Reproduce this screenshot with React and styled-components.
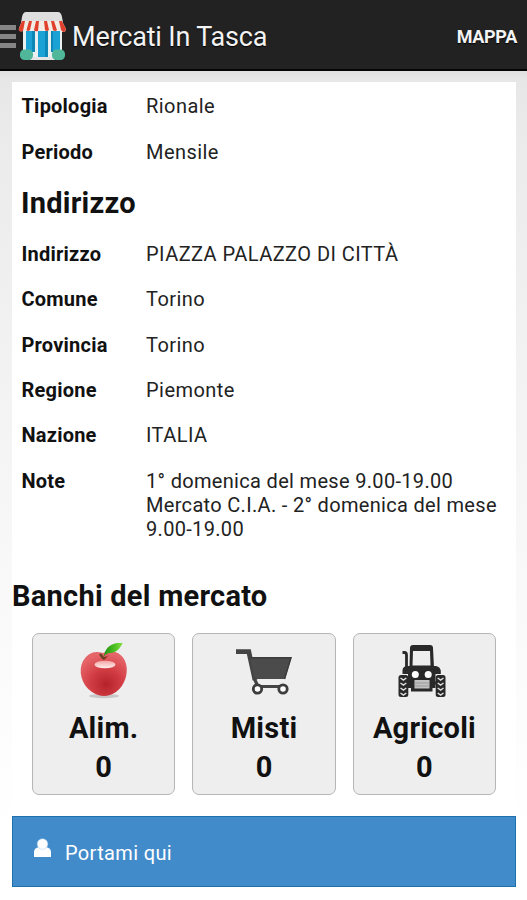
import React from "react";
import styled, { createGlobalStyle } from "styled-components";

const GlobalStyle = createGlobalStyle`
  * { box-sizing: border-box; }
  body { margin: 0; background: #fff; }
`;

const Screen = styled.div`
  width: 527px;
  height: 900px;
  overflow: hidden;
  display: flex;
  flex-direction: column;
  font-family: Roboto, "Liberation Sans", sans-serif;
  color: #111;
  background: linear-gradient(#dedede 70px, #e7e7e7 80px, #ebebeb 140px, #f7f7f7 520px, #fff 830px);
`;

const Header = styled.header`
  height: 71px;
  flex: none;
  display: flex;
  align-items: center;
  background: #222;
  border-bottom: 2px solid #050505;
  color: #f3f3f3;
  padding: 3px 10px 0 0;
  text-shadow: 0 1px 1px #000;
`;

const MenuIcon = styled.div`
  width: 16px;
  height: 23px;
  display: flex;
  flex-direction: column;
  justify-content: space-between;
  margin-right: 2px;
`;

const MenuBar = styled.span`
  height: 5px;
  background: #858585;
`;

const AppTitle = styled.h1`
  flex: 1;
  margin: 0 0 0 6px;
  padding-top: 2px;
  font-size: 27px;
  font-weight: 400;
  line-height: 32px;
  letter-spacing: -0.18px;
`;

const MapLink = styled.span`
  font-size: 18px;
  font-weight: 700;
  letter-spacing: -0.3px;
`;

const Card = styled.main`
  width: 504px;
  height: 734px;
  flex: none;
  margin: 11px 0 0 12px;
  background: #fff;
`;

const Details = styled.dl`
  margin: 0;
  padding-left: 9.5px;
`;

const DetailRow = styled.div`
  display: grid;
  grid-template-columns: 124.5px 1fr;
  padding: 12.4px 0 8.65px;
  font-size: 20px;
  line-height: 24.3px;
`;

const Label = styled.dt`
  font-weight: 700;
  letter-spacing: 0.22px;
`;

const Value = styled.dd`
  margin: 0;
  color: #222;
  white-space: pre-line;
  letter-spacing: ${(p) => p.$spacing || "0.45px"};
`;

const SectionTitle = styled.h2`
  margin: 0;
  height: 57px;
  padding: 13.6px 0 0 9px;
  font-size: 29px;
  line-height: 34px;
  font-weight: 700;
  letter-spacing: 0.25px;
`;

const StallsTitle = styled(SectionTitle)`
  height: 83px;
  padding: 28.6px 0 0;
`;

const Stalls = styled.div`
  display: flex;
  gap: 17px;
  padding-left: 20px;
`;

const Stall = styled.div`
  width: 143.4px;
  height: 162px;
  border: 1.5px solid #b5b5b5;
  border-radius: 7px;
  background: #eee;
  display: flex;
  flex-direction: column;
  align-items: center;
  padding-top: 8px;
  font-size: 29px;
  font-weight: 700;
  line-height: 39px;
  letter-spacing: 0.25px;
`;

const StallIcon = styled.svg`
  width: 60px;
  height: 60px;
  margin-bottom: 7px;
  flex: none;
`;

const DirectionsButton = styled.button`
  width: 504px;
  height: 71px;
  flex: none;
  margin-left: 12px;
  border: 1px solid #1d72ae;
  background: #428bca;
  color: #fff;
  display: flex;
  align-items: center;
  padding: 2px 0 0 20px;
  gap: 13px;
  font: 400 20px/24px Roboto, "Liberation Sans", sans-serif;
  letter-spacing: 0.35px;
`;

const UserIcon = styled.svg`
  width: 19px;
  height: 20px;
  margin-top: -9px;
`;

const ShopIcon = () => (
  <svg width="48" height="50" viewBox="0 0 48 50">
    <path d="M8 1H40Q43 1 44 6L45 12H3L4 6Q5 1 8 1Z" fill="#dedede" />
    <rect x="5" y="17" width="39" height="29" fill="#e9f0f2" />
    <path d="M8 20H17V41H8ZM20 20H30V46H20ZM33 20H42V41H33Z" fill="#1ba2d5" />
    <path d="M14 20H17V41H14ZM27 20H30V46H27ZM33 20H35V41H33Z" fill="#0c87b7" />
    <path d="M4 10H44L48 18Q48 21 45 21Q42 21 41 19Q39 21 36 19Q34 21 31 19Q28 21 25 19Q22 21 19 19Q16 21 13 19Q10 21 7 19Q5 21 2 20Q0 19 1 17Z" fill="#f3ece4" />
    <path d="M4 10H7L5 20Q0 22 1 17ZM11 10H14L12 19Q10 21 8.5 19ZM18 10H21L20 20Q17 21 16 19ZM26 10H29L31 19Q29 21 27 19ZM33 10H36L39 19Q37 21 35 19ZM41 10H44L48 18Q48 21 45 21L43 19Z" fill="#e0412c" />
    <path d="M12 46H37V49H12Z" fill="#e5e5e5" />
    <rect x="2" y="38.5" width="13" height="10.5" rx="4.5" fill="#50b79b" />
    <rect x="34" y="38.5" width="13" height="10.5" rx="4.5" fill="#50b79b" />
  </svg>
);

const AppleIcon = () => (
  <StallIcon viewBox="0 0 60 60">
    <defs>
      <radialGradient id="skin" cx=".55" cy=".74" r=".68">
        <stop offset="0" stopColor="#b5222a" />
        <stop offset=".5" stopColor="#d23d44" />
        <stop offset="1" stopColor="#e56568" />
      </radialGradient>
      <linearGradient id="shine" x2="0" y2="1">
        <stop stopColor="#f2a4a4" />
        <stop offset="1" stopColor="#fff0ed" />
      </linearGradient>
      <linearGradient id="leaf">
        <stop stopColor="#208e13" />
        <stop offset=".6" stopColor="#50c324" />
        <stop offset="1" stopColor="#86df48" />
      </linearGradient>
    </defs>
    <ellipse cx="30" cy="54" rx="15" ry="2.2" fill="#c8c8c8" />
    <path d="M29 11C37 7 46 10 50 17C56 27 52 43 42 50Q30 58 18 50C7 43 4 28 9 19Q16 7 29 11Z" fill="url(#skin)" />
    <ellipse cx="31" cy="22.5" rx="10.5" ry="3.8" fill="url(#shine)" />
    <path d="M24 12Q28 18 35 13L30 18Z" fill="#842a1b" />
    <path d="M26 12L30 17" stroke="#694322" strokeWidth="2.5" />
    <path d="M30 15Q31 3 43 1H47Q50 0 47 4Q43 11 36 11Q32 11 30 15Z" fill="url(#leaf)" />
  </StallIcon>
);

const CartIcon = () => (
  <StallIcon viewBox="0 0 60 60">
    <path d="M2 9.7H14.8L21 38" fill="none" stroke="#444" strokeWidth="4.8" />
    <path d="M15.5 15H57.5L51 37H21Z" fill="#4b4b4b" />
    <path d="M16 15.7H57L50.5 37" fill="none" stroke="#3c3c3c" strokeWidth="1.5" />
    <path d="M20 36L24 44.5H50" fill="none" stroke="#444" strokeWidth="3.2" />
    <circle cx="23.5" cy="47" r="4.2" fill="#fff" stroke="#3d3d3d" strokeWidth="2.8" />
    <circle cx="49" cy="47" r="4.2" fill="#fff" stroke="#3d3d3d" strokeWidth="2.8" />
  </StallIcon>
);

const TractorIcon = () => (
  <StallIcon viewBox="0 0 60 60">
    <path d="M16 6Q16 3 19 3H36Q39 3 39 6L40 26H15.5Z" fill="#292929" />
    <path d="M19 9H36L36.5 23.5H18.5Z" fill="#eee" />
    <path d="M8.5 10.5H10.5Q12.5 10.5 12.5 13V26" fill="none" stroke="#292929" strokeWidth="2.8" />
    <path d="M8.5 32V28Q9 24 14 24H42Q46.500 25 46.800 29V32Z" fill="#292929" />
    <path d="M14 31H41.500V46H38.500V49.500H17V46H14Z" fill="#292929" />
    <path d="M12 41H44" stroke="#292929" strokeWidth="3" />
    <circle cx="21.300" cy="32.500" r="3.500" fill="#fff" />
    <circle cx="34.200" cy="32.500" r="3.500" fill="#fff" />
    <path d="M20.500 38H35.500V46.500H20.500Z" fill="#c2c2c2" />
    <path d="M20.500 41H35.500M20.500 44H35.500" stroke="#999" />
    <rect x="4.500" y="33" width="9.800" height="22" rx="2.500" fill="#292929" />
    <rect x="41.700" y="33" width="9.800" height="22" rx="2.500" fill="#292929" />
    <path d="M6.500 36L9.400 38L12.300 36M6.500 41L9.400 43L12.300 41M6.500 46L9.400 48L12.300 46M6.500 51L9.400 53L12.300 51M43.700 36L46.600 38L49.500 36M43.700 41L46.600 43L49.500 41M43.700 46L46.600 48L49.500 46M43.700 51L46.600 53L49.500 51" fill="none" stroke="#ddd" strokeWidth="1.5" />
  </StallIcon>
);

const market = [
  { label: "Tipologia", value: "Rionale" },
  { label: "Periodo", value: "Mensile" },
];

const address = [
  { label: "Indirizzo", value: "PIAZZA PALAZZO DI CITTÀ" },
  { label: "Comune", value: "Torino" },
  { label: "Provincia", value: "Torino" },
  { label: "Regione", value: "Piemonte" },
  { label: "Nazione", value: "ITALIA" },
  {
    label: "Note",
    value: "1° domenica del mese 9.00-19.00\nMercato C.I.A. - 2° domenica del mese\n9.00-19.00",
    spacing: "0.32px",
  },
];

const stalls = [
  { name: "Alim.", Icon: AppleIcon },
  { name: "Misti", Icon: CartIcon },
  { name: "Agricoli", Icon: TractorIcon },
];

const DetailList = ({ items }) => (
  <Details>
    {items.map(({ label, value, spacing }) => (
      <DetailRow key={label}>
        <Label>{label}</Label>
        <Value $spacing={spacing}>{value}</Value>
      </DetailRow>
    ))}
  </Details>
);

export default function App() {
  return (
    <>
      <GlobalStyle />
      <Screen>
        <Header>
          <MenuIcon>
            <MenuBar />
            <MenuBar />
            <MenuBar />
          </MenuIcon>
          <ShopIcon />
          <AppTitle>Mercati In Tasca</AppTitle>
          <MapLink>MAPPA</MapLink>
        </Header>
        <Card>
          <DetailList items={market} />
          <SectionTitle>Indirizzo</SectionTitle>
          <DetailList items={address} />
          <StallsTitle>Banchi del mercato</StallsTitle>
          <Stalls>
            {stalls.map(({ name, Icon }) => (
              <Stall key={name}>
                <Icon />
                <span>{name}</span>
                <span>0</span>
              </Stall>
            ))}
          </Stalls>
        </Card>
        <DirectionsButton>
          <UserIcon viewBox="0 0 19 20">
            <path d="M1 19V14Q1 10 6 9H13Q18 10 18 14V19Z" fill="#fff" />
            <circle cx="9.5" cy="6" r="5.3" fill="#fff" stroke="#a9cdec" strokeWidth=".5" />
          </UserIcon>
          Portami qui
        </DirectionsButton>
      </Screen>
    </>
  );
}
